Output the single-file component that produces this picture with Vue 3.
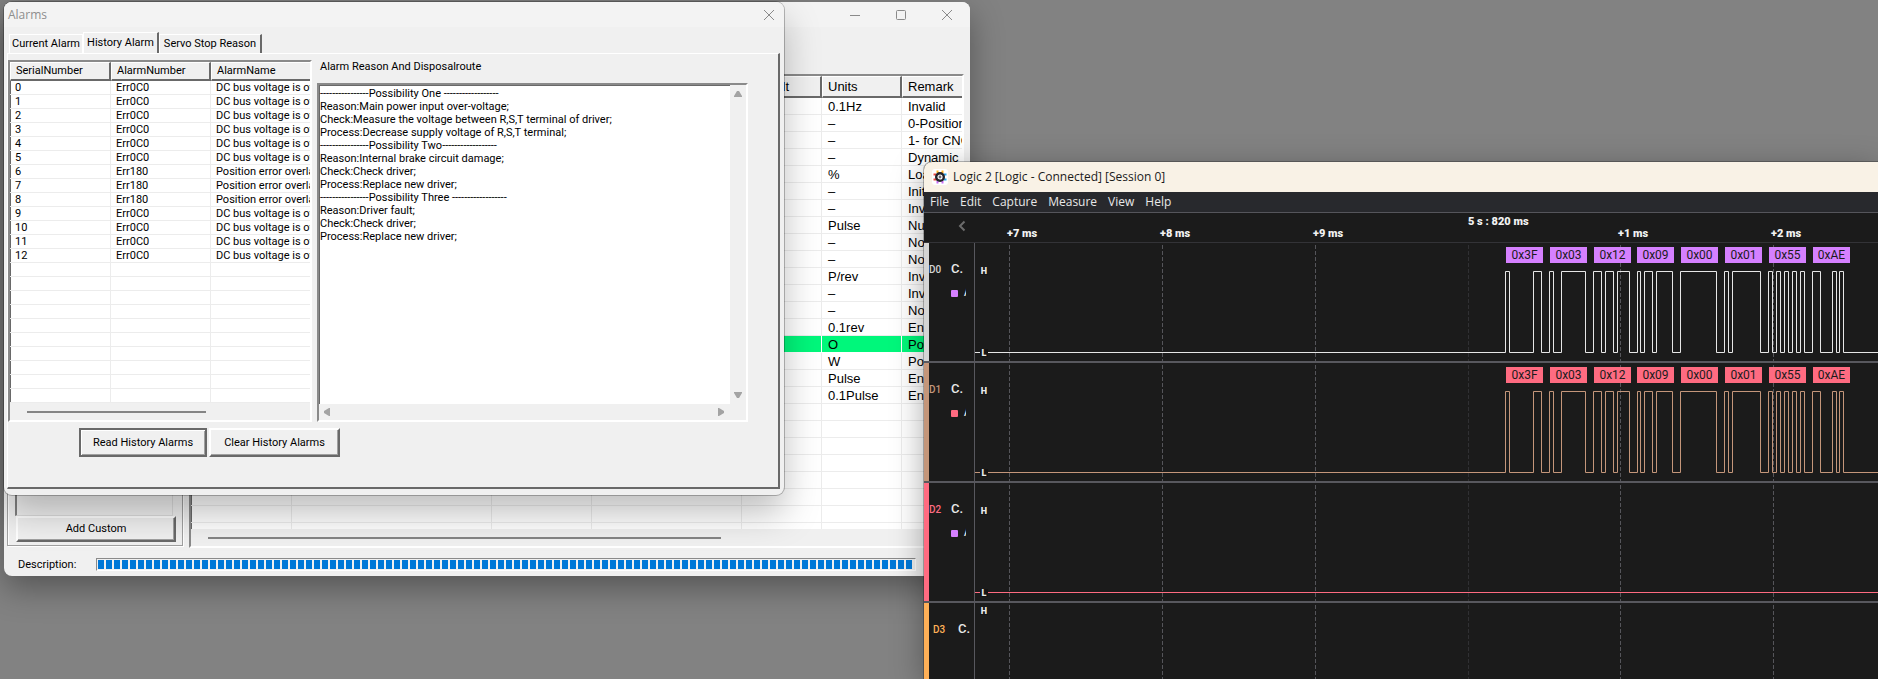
<script setup>
const alarms = Array.from({ length: 23 }, (_, i) => {
  if (i > 12) return { id: '', code: '', name: '' }
  const position = i >= 6 && i <= 8
  return {
    id: String(i),
    code: position ? 'Err180' : 'Err0C0',
    name: position ? 'Position error overlarge' : 'DC bus voltage is over',
  }
})

const reasons = `----------------Possibility One ------------------
Reason:Main power input over-voltage;
Check:Measure the voltage between R,S,T terminal of driver;
Process:Decrease supply voltage of R,S,T terminal;
----------------Possibility Two------------------
Reason:Internal brake circuit damage;
Check:Check driver;
Process:Replace new driver;
----------------Possibility Three ------------------
Reason:Driver fault;
Check:Check driver;
Process:Replace new driver;`

const params = [
  ['0.1Hz', 'Invalid'],
  ['–', '0-Position'],
  ['–', '1- for CNC'],
  ['–', 'Dynamic'],
  ['%', 'Loa'],
  ['–', 'Init'],
  ['–', 'Inv'],
  ['Pulse', 'Nu'],
  ['–', 'No'],
  ['–', 'No'],
  ['P/rev', 'Inv'],
  ['–', 'Inv'],
  ['–', 'No'],
  ['0.1rev', 'En'],
  ['O', 'Po'],
  ['W', 'Po'],
  ['Pulse', 'En'],
  ['0.1Pulse', 'En'],
  ...Array.from({ length: 8 }, () => ['', '']),
]

const menus = ['File', 'Edit', 'Capture', 'Measure', 'View', 'Help']

const ticks = [
  { x: 34, label: '+7 ms' },
  { x: 187, label: '+8 ms' },
  { x: 340, label: '+9 ms' },
  { x: 493, label: '5 s : 820 ms', major: true },
  { x: 645, label: '+1 ms' },
  { x: 798, label: '+2 ms' },
]

const edges = [
  530, 534, 558, 566, 574, 578, 586, 610, 618, 626, 630, 638, 642, 654, 662, 665, 669, 677,
  681, 697, 705, 741, 749, 753, 757, 785, 793, 797, 801, 805, 809, 813, 817, 821, 825, 829,
  837, 845, 857, 861, 864, 868,
]
const bytes = [
  [531, '0x3F'], [575, '0x03'], [619, '0x12'], [662, '0x09'],
  [706, '0x00'], [750, '0x01'], [794, '0x55'], [838, '0xAE'],
]

function wave(points) {
  let high = false
  let d = 'M0 109.5'
  for (const x of points) {
    d += `H${x + 0.5}V${high ? 109.5 : 28.5}`
    high = !high
  }
  return d + 'H4000'
}

const channels = [
  { id: 'D0', color: '#d4d4d4', line: '#e6e6e6', dot: '#d580ff', bytes, path: wave(edges) },
  { id: 'D1', color: '#c4967a', line: '#c4967a', dot: '#ff6b81', bytes, path: wave(edges) },
  { id: 'D2', color: '#ff6b81', line: '#ff6b81', dot: '#d580ff', bytes: [], path: wave([]) },
  { id: 'D3', color: '#ffb057', line: '#ffb057', dot: '', bytes: [], path: '', compact: true },
]
</script>

<template>
  <main class="desktop">
    <section class="window servo" aria-label="Servo parameters">
      <header class="titlebar">
        <span class="title"></span>
        <button class="caption" aria-label="Minimize"><svg width="12" height="12"><path d="M1 6.5H11" /></svg></button>
        <button class="caption" aria-label="Maximize"><svg width="12" height="12"><rect x="1.5" y="1.5" width="9" height="9" rx="1" /></svg></button>
        <button class="caption" aria-label="Close"><svg width="12" height="12"><path d="M1 1L11 11M11 1L1 11" /></svg></button>
      </header>
      <div class="workspace">
        <aside class="side">
          <div class="sidelist"></div>
          <button class="push">Add Custom</button>
        </aside>
        <div class="params sunken">
          <div class="rows">
            <table>
              <colgroup><col class="p1"><col class="p2"><col class="p3"><col class="p4"><col class="p5"><col class="p6"><col></colgroup>
              <thead>
                <tr><th></th><th></th><th></th><th></th><th class="end">Default</th><th>Units</th><th>Remark</th></tr>
              </thead>
              <tbody>
                <tr v-for="(p, i) in params" :key="i" :class="{ picked: i === 14 }">
                  <td></td><td></td><td></td><td></td><td></td><td>{{ p[0] }}</td><td>{{ p[1] }}</td>
                </tr>
              </tbody>
            </table>
          </div>
          <div class="hbar"><i class="thumb"></i></div>
        </div>
      </div>
      <footer class="status">
        <span id="desc">Description:</span>
        <div class="progress" role="progressbar" aria-labelledby="desc" aria-valuenow="100"><i v-for="n in 102" :key="n"></i></div>
      </footer>
    </section>

    <section class="window alarms" aria-label="Alarms">
      <header class="titlebar">
        <span class="title">Alarms</span>
        <button class="caption" aria-label="Close"><svg width="12" height="12"><path d="M1 1L11 11M11 1L1 11" /></svg></button>
      </header>
      <nav class="tabs" role="tablist">
        <button class="tab" role="tab">Current Alarm</button>
        <button class="tab active" role="tab" aria-selected="true">History Alarm</button>
        <button class="tab last" role="tab">Servo Stop Reason</button>
      </nav>
      <div class="page">
        <div class="columns">
          <div class="history sunken">
            <div class="rows">
              <table>
                <colgroup><col class="a1"><col class="a2"><col></colgroup>
                <thead><tr><th>SerialNumber</th><th>AlarmNumber</th><th>AlarmName</th></tr></thead>
                <tbody>
                  <tr v-for="(a, i) in alarms" :key="i"><td>{{ a.id }}</td><td>{{ a.code }}</td><td>{{ a.name }}</td></tr>
                </tbody>
              </table>
            </div>
            <div class="hbar"><i class="thumb"></i></div>
          </div>
          <div class="detail">
            <label for="reason">Alarm Reason And Disposalroute</label>
            <div class="memo sunken">
              <textarea id="reason" readonly wrap="off" :value="reasons"></textarea>
              <div class="vbar">
                <svg width="8" height="6"><path d="M3 0H5L8 5V6H0V5Z" /></svg>
                <svg width="8" height="6"><path d="M0 0H8V1L5 6H3L0 1Z" /></svg>
              </div>
              <div class="hscroll">
                <svg width="6" height="8"><path d="M6 0V8H5L0 5V3L5 0Z" /></svg>
                <svg width="6" height="8"><path d="M0 0V8H1L6 5V3L1 0Z" /></svg>
              </div>
            </div>
          </div>
        </div>
        <div class="actions">
          <button class="push default">Read History Alarms</button>
          <button class="push">Clear History Alarms</button>
        </div>
      </div>
    </section>

    <section class="logic" aria-label="Logic 2">
      <header class="logic-title">
        <svg width="16" height="16" viewBox="0 0 16 16">
          <rect width="16" height="16" rx="3" fill="#fff" />
          <path d="M5.500 1.500V4M10.500 1.500V4" stroke="#ffb41f" stroke-width="2" />
          <path d="M5.500 12V14.500M10.500 12V14.500" stroke="#c86bf5" stroke-width="2" />
          <path d="M1.500 5.500H4M1.500 10.500H4" stroke="#f0483e" stroke-width="2" />
          <path d="M12 5.500H14.500M12 10.500H14.500" stroke="#2ba8ea" stroke-width="2" />
          <circle cx="8" cy="8" r="5" fill="#23232a" />
          <circle cx="8" cy="8" r="2" fill="#6b6b72" stroke="#fff" stroke-width="1.200" />
        </svg>
        <span>Logic 2 [Logic - Connected] [Session 0]</span>
      </header>
      <nav class="menu"><button v-for="m in menus" :key="m">{{ m }}</button></nav>
      <div class="ruler">
        <button class="back" aria-label="Collapse"><svg width="8" height="12"><path d="M6.500 1.500L2 6L6.500 10.500" /></svg></button>
        <div class="scale">
          <span v-for="t in ticks" :key="t.label" :class="{ major: t.major }" :style="{ left: t.x + 'px' }">{{ t.label }}</span>
        </div>
      </div>
      <div v-for="c in channels" :key="c.id" class="channel" :class="{ compact: c.compact }">
        <div class="head" :style="{ borderLeftColor: c.color }">
          <span class="chid" :style="{ color: c.color }">{{ c.id }}</span>
          <span class="chname">C.</span>
          <span v-if="c.dot" class="analyzer"><i :style="{ background: c.dot }"></i><b>A</b></span>
        </div>
        <div class="plot">
          <svg class="trace">
            <line
              v-for="t in ticks" :key="t.x" :x1="t.x + 0.5" :x2="t.x + 0.5" y1="-4" y2="120"
              :stroke="t.major ? '#303033' : '#55555a'" stroke-dasharray="4 2"
            />
            <path :d="c.path" fill="none" :stroke="c.line" />
          </svg>
          <span class="mark high">H</span>
          <span v-if="!c.compact" class="mark low">L</span>
          <span v-for="b in c.bytes" :key="b[0]" class="byte" :style="{ left: b[0] + 'px', background: c.dot }">{{ b[1] }}</span>
        </div>
      </div>
    </section>
  </main>
</template>

<style>
body {
  margin: 0;
  background: #828282;
}
</style>

<style scoped>
* {
  box-sizing: border-box;
}
.desktop {
  position: relative;
  min-height: 100vh;
  overflow: hidden;
  background: #828282;
  font: 11px/14px Roboto, "Liberation Sans", sans-serif;
  color: #000;
}
button {
  margin: 0;
  padding: 0;
  border: 0;
  background: none;
  font: inherit;
  color: inherit;
  white-space: nowrap;
}
.window {
  position: absolute;
  display: flex;
  flex-direction: column;
  border-radius: 8px;
  background: #f0f0f0;
}
.servo {
  left: 4px;
  top: 2px;
  width: 966px;
  height: 574px;
  box-shadow: 0 12px 32px rgba(0, 0, 0, 0.35);
}
.alarms {
  left: 4px;
  top: 2px;
  width: 780px;
  box-shadow: 0 0 0 1px rgba(0, 0, 0, 0.25), 0 18px 36px rgba(0, 0, 0, 0.26);
}
.titlebar {
  display: flex;
  flex: none;
  align-items: center;
  height: 25px;
  border-radius: 8px 8px 0 0;
  background: #f3f3f3;
}
.title {
  flex: 1;
  padding-left: 4px;
  font: 12px/16px "Open Sans", sans-serif;
  color: #8e8e8e;
}
.caption {
  display: flex;
  justify-content: center;
  width: 46px;
}
.alarms .caption {
  width: 30px;
}
.caption svg {
  fill: none;
  stroke: #8a8a8a;
}
.sunken {
  border: 2px solid;
  border-color: #8a8a8a #fff #fff #8a8a8a;
  box-shadow: inset 1px 1px #696969;
  background: #fff;
}
.push {
  border: 2px solid;
  border-color: #fff #696969 #696969 #fff;
  box-shadow: inset -1px -1px #a0a0a0;
}
.rows {
  flex: 1;
  min-height: 0;
  overflow: hidden;
}
table {
  width: 100%;
  table-layout: fixed;
  border-collapse: separate;
  border-spacing: 0;
}
th,
td {
  overflow: hidden;
  padding: 0;
  font-weight: normal;
  text-align: left;
  white-space: nowrap;
}
th {
  border: solid;
  border-width: 1px 2px 2px 1px;
  border-color: #fff #696969 #696969 #fff;
  background: #f0f0f0;
}
td {
  border-right: 1px solid #ececec;
  border-bottom: 1px solid #ececec;
}
td:last-child,
th:last-child {
  border-right: 0;
}
.hbar {
  display: flex;
  flex: none;
  align-items: center;
  height: 17px;
  background: #f0f0f0;
}
.thumb {
  height: 2px;
  background: #858585;
}

/* Servo window */
.workspace {
  display: flex;
  flex: 1;
  gap: 6px;
  min-height: 0;
  padding: 47px 6px 0 3px;
}
.side {
  display: flex;
  flex-direction: column;
  width: 176px;
  margin-bottom: 2px;
  padding: 8px 6px 3px 7px;
  border: 1px solid #a0a0a0;
  box-shadow: inset 1px 1px #fff, 1px 1px #fff;
}
.sidelist {
  flex: 1;
  margin-right: 3px;
  border: 1px solid #dcdcdc;
  border-left: 2px solid #808080;
}
.side .push {
  height: 26px;
  margin-left: 1px;
}
.params {
  display: flex;
  flex: 1;
  flex-direction: column;
  min-width: 0;
  font: 13px/15px "Liberation Sans", Arial, sans-serif;
}
.p1 { width: 101px; }
.p2 { width: 200px; }
.p3 { width: 100px; }
.p4 { width: 150px; }
.p5 { width: 80px; }
.p6 { width: 80px; }
.params th {
  height: 22px;
  padding-left: 5px;
}
.params th.end {
  direction: rtl;
  padding-right: 31px;
}
.params td {
  height: 17px;
  padding: 1px 0 0 6px;
}
.picked td {
  border-color: #fff;
  background: #00f77b;
}
.params .thumb {
  width: 513px;
  margin-left: 17px;
}
.status {
  display: flex;
  flex: none;
  align-items: center;
  height: 28px;
  padding: 5px 0 0 14px;
}
.status span {
  width: 78px;
}
.progress {
  display: flex;
  gap: 2px;
  padding: 1px 3px 1px 1px;
  border: 1px solid;
  border-color: #8a8a8a #fff #fff #8a8a8a;
}
.progress i {
  width: 6px;
  height: 9px;
  background: #0078d7;
}

/* Alarms window */
.tabs {
  display: flex;
  align-items: flex-end;
  height: 26px;
  padding-left: 5px;
}
.tab {
  height: 19px;
  width: 74px;
  border: 1px solid #fff;
  border-bottom: 0;
}
.tab.active {
  height: 21px;
  width: 76px;
  border-right: 2px solid #696969;
}
.tab.last {
  width: 103px;
  border-right: 2px solid #696969;
}
.page {
  margin: 0 4px 6px 3px;
  padding: 6px 30px 30px 0;
  border: solid;
  border-width: 1px 2px 2px 1px;
  border-color: #fff #696969 #696969 #fff;
}
.columns {
  display: flex;
  gap: 5px;
}
.history {
  display: flex;
  flex-direction: column;
  width: 304px;
  height: 362px;
}
.a1 { width: 101px; }
.a2 { width: 100px; }
.history th {
  height: 19px;
  padding-left: 5px;
}
.history td {
  height: 14px;
  padding-left: 5px;
  line-height: 13px;
}
.history .thumb {
  width: 179px;
  margin-left: 17px;
}
.detail {
  display: flex;
  flex: 1;
  flex-direction: column;
}
.detail label {
  height: 23px;
  padding-left: 3px;
}
.memo {
  display: grid;
  flex: 1;
  grid-template: 1fr 16px / 1fr 16px;
}
textarea {
  width: 100%;
  height: 100%;
  margin: 0;
  padding: 2px 1px;
  border: 0;
  outline: 0;
  resize: none;
  overflow: hidden;
  background: none;
  font: inherit;
  line-height: 13px;
  color: inherit;
}
.vbar,
.hscroll {
  display: flex;
  align-items: center;
  justify-content: space-between;
  background: #f0f0f0;
  fill: #a3a3a3;
}
.vbar {
  flex-direction: column;
  padding: 6px 0;
}
.hscroll {
  grid-column: 1 / 3;
  padding: 0 22px 0 5px;
}
.actions {
  display: flex;
  gap: 2px;
  padding: 6px 0 0 71px;
}
.actions .push {
  width: 131px;
  height: 29px;
}
.actions .push.default {
  width: 128px;
  border-color: #696969;
  box-shadow: inset 1px 1px #fff, inset -1px -1px #a0a0a0;
}

/* Logic window */
.logic {
  position: absolute;
  left: 924px;
  right: 0;
  top: 162px;
  bottom: 0;
  overflow: hidden;
  border-radius: 8px 0 0 0;
  box-shadow: 0 0 0 1px rgba(0, 0, 0, 0.25), 0 8px 32px rgba(0, 0, 0, 0.35);
  background: #1b1b1b;
  font-family: Roboto, sans-serif;
  color: #e8e8e8;
}
.logic-title {
  display: flex;
  gap: 5px;
  align-items: center;
  height: 30px;
  padding-left: 8px;
  background: #f9f2e6;
  font: 12px/16px "Open Sans", sans-serif;
  color: #1b1b1b;
}
.menu {
  display: flex;
  gap: 11px;
  height: 21px;
  padding-left: 6px;
  border-bottom: 1px solid #55555b;
  background: #28292d;
  font: 12px/20px "Open Sans", sans-serif;
}
.ruler {
  display: flex;
  height: 30px;
  border-bottom: 1px solid #333337;
}
.back {
  width: 51px;
  padding: 0 9px 0 0;
  text-align: right;
}
.back svg {
  fill: none;
  stroke: #6c6c6c;
  stroke-width: 2;
}
.scale {
  position: relative;
  flex: 1;
}
.scale span {
  position: absolute;
  top: 14px;
  margin-left: -2px;
  font-size: 11px;
  font-weight: 900;
  white-space: nowrap;
  color: #f2f2f2;
}
.scale .major {
  top: 2px;
  margin-left: 0;
}
.channel {
  display: flex;
  height: 120px;
  border-bottom: 2px solid #58585e;
}
.head {
  display: grid;
  grid-template: 14px 14px / 22px 18px;
  row-gap: 10px;
  width: 51px;
  padding-top: 19px;
  border-right: 1px solid #58585e;
  border-left: 5px solid;
}
.chid {
  font: 500 10px/16px Roboto, sans-serif;
}
.chname {
  font: 500 13px/14px Roboto, sans-serif;
}
.analyzer {
  display: flex;
  grid-column: 2;
  gap: 6px;
  align-items: center;
  overflow: hidden;
  width: 15px;
}
.analyzer i {
  flex: none;
  width: 7px;
  height: 7px;
  border-radius: 1px;
}
.analyzer b {
  font: 500 10px/14px Roboto, sans-serif;
}
.compact .head {
  grid-template-columns: 25px 14px;
  padding-left: 4px;
}
.plot {
  position: relative;
  flex: 1;
  overflow: hidden;
}
.trace {
  display: block;
  width: 100%;
  height: 100%;
}
.mark {
  position: absolute;
  left: 5px;
  width: 8px;
  background: #141414;
  font: 900 9px/8px Roboto, sans-serif;
  text-align: center;
}
.mark.high {
  top: 24px;
}
.mark.low {
  top: 106px;
}
.compact .mark.high {
  top: 4px;
}
.byte {
  position: absolute;
  top: 4px;
  width: 37px;
  height: 16px;
  font-size: 12px;
  line-height: 16px;
  text-align: center;
  color: #1b1b1b;
}
</style>
